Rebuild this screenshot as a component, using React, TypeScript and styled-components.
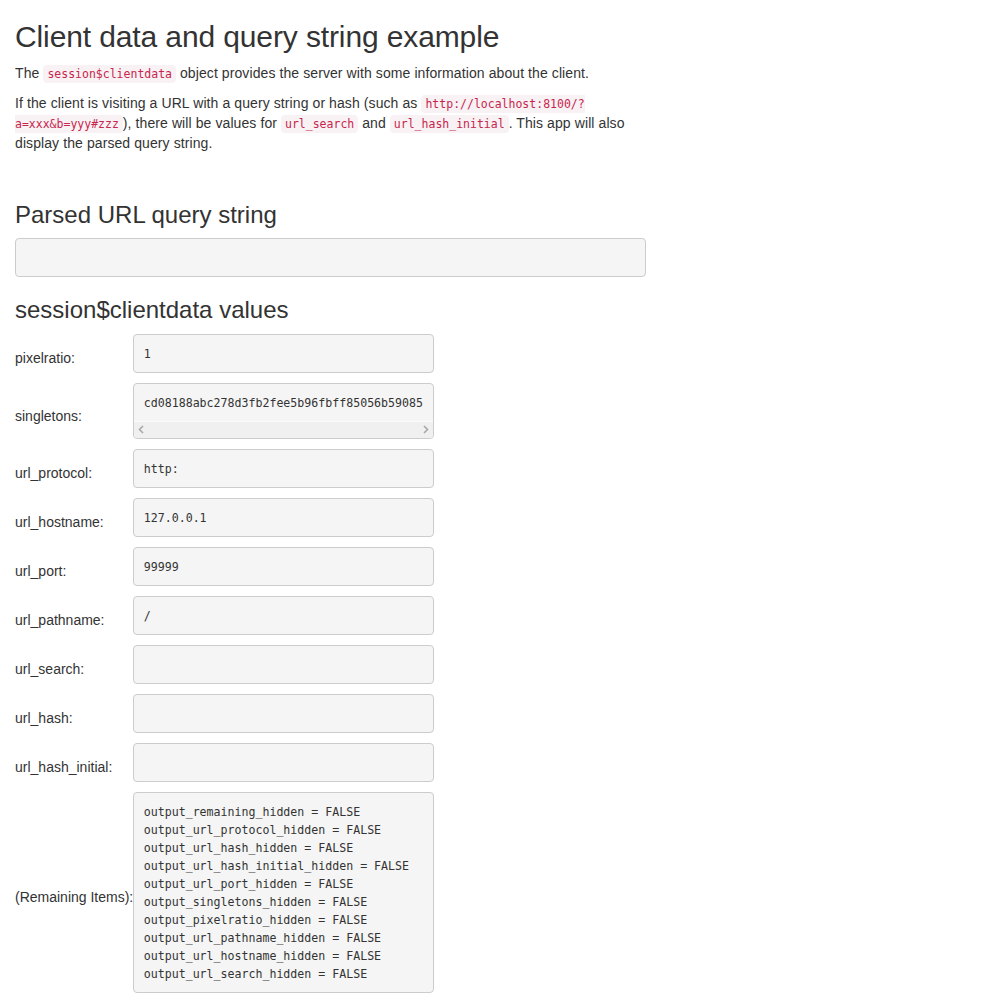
import React from "react";
import styled, { createGlobalStyle } from "styled-components";

const GlobalStyle = createGlobalStyle`
  html, body { margin: 0; padding: 0; background: #fff; }
  body {
    font-family: "Liberation Sans", Arial, sans-serif;
    font-size: 14px;
    line-height: 1.42857143;
    color: #333;
  }
  * { box-sizing: border-box; }
`;

const Page = styled.div`
  padding: 0 15px;
`;

const Column = styled.div`
  width: 631px;
`;

const Title = styled.h2`
  font-size: 30px;
  font-weight: 500;
  line-height: 1.1;
  letter-spacing: -0.12px;
  margin: 20px 0 10px;
`;

const Intro = styled.div`
  padding-bottom: 19px;
`;

const Para = styled.p`
  margin: 0 0 10px;
  letter-spacing: 0.09px;
`;

const Code = styled.code`
  font-family: "DejaVu Sans Mono", "Liberation Mono", monospace;
  font-size: 11.5px;
  letter-spacing: 0;
  color: #c7254e;
  background: #f9f2f4;
  padding: 2px 4px;
  border-radius: 4px;
`;

const SectionTitle = styled.h3`
  font-size: 24px;
  font-weight: 500;
  line-height: 1.1;
  margin: 20px 0 10px;
`;

const Pre = styled.pre<{ $width?: number }>`
  display: block;
  margin: 0 0 10px;
  padding: 10.5px 9.5px 8.5px;
  width: ${(p) => (p.$width ? `${p.$width}px` : "auto")};
  min-height: 39px;
  font-family: "DejaVu Sans Mono", "Liberation Mono", monospace;
  font-size: 11.6px;
  line-height: 18px;
  color: #333;
  background: #f5f5f5;
  border: 1px solid #ccc;
  border-radius: 4px;
  white-space: pre;
  overflow: hidden;
`;

const ScrollPre = styled(Pre)`
  padding: 10.5px 9.5px 0;
`;

const ScrollText = styled.div`
  padding-bottom: 8.5px;
`;

const ScrollBar = styled.div`
  margin: 0 -9.5px;
  height: 17px;
  display: flex;
  align-items: center;
  justify-content: space-between;
  padding: 0 4px;
  background: #f0f0f0;
  border-top: 1px solid #fbfbfb;
`;

const Arrow = styled.svg`
  width: 6px;
  height: 9px;
  display: block;
`;

const ValueGrid = styled.div`
  display: grid;
  grid-template-columns: max-content 301px;
  align-items: center;
`;

const Label = styled.div`
  white-space: nowrap;
`;

const rows: [string, string][] = [
  ["pixelratio:", "1"],
  ["singletons:", "cd08188abc278d3fb2fee5b96fbff85056b59085"],
  ["url_protocol:", "http:"],
  ["url_hostname:", "127.0.0.1"],
  ["url_port:", "99999"],
  ["url_pathname:", "/"],
  ["url_search:", ""],
  ["url_hash:", ""],
  ["url_hash_initial:", ""],
];

const remaining = [
  "output_remaining_hidden = FALSE",
  "output_url_protocol_hidden = FALSE",
  "output_url_hash_hidden = FALSE",
  "output_url_hash_initial_hidden = FALSE",
  "output_url_port_hidden = FALSE",
  "output_singletons_hidden = FALSE",
  "output_pixelratio_hidden = FALSE",
  "output_url_pathname_hidden = FALSE",
  "output_url_hostname_hidden = FALSE",
  "output_url_search_hidden = FALSE",
].join("\n");

export default function App() {
  return (
    <>
      <GlobalStyle />
      <Page>
        <Title>Client data and query string example</Title>
        <Column>
          <Intro>
            <Para>
              The <Code>session$clientdata</Code> object provides the server with some
              information about the client.
            </Para>
            <Para>
              If the client is visiting a URL with a query string or hash (such as{" "}
              <Code>http://localhost:8100/?a=xxx&amp;b=yyy#zzz</Code>), there will be values
              for <Code>url_search</Code> and <Code>url_hash_initial</Code>. This app will
              also display the parsed query string.
            </Para>
          </Intro>
          <SectionTitle>Parsed URL query string</SectionTitle>
          <Pre></Pre>
          <SectionTitle>session$clientdata values</SectionTitle>
          <ValueGrid>
            {rows.map(([label, value]) => (
              <React.Fragment key={label}>
                <Label>{label}</Label>
                {label === "singletons:" ? (
                  <ScrollPre $width={301}>
                    <ScrollText>{value}</ScrollText>
                    <ScrollBar>
                      <Arrow viewBox="0 0 6 9">
                        <path d="M5 1 L1.5 4.5 L5 8" fill="none" stroke="#a8a8a8" strokeWidth="1.6" />
                      </Arrow>
                      <Arrow viewBox="0 0 6 9">
                        <path d="M1 1 L4.5 4.5 L1 8" fill="none" stroke="#a8a8a8" strokeWidth="1.6" />
                      </Arrow>
                    </ScrollBar>
                  </ScrollPre>
                ) : (
                  <Pre $width={301}>{value}</Pre>
                )}
              </React.Fragment>
            ))}
            <Label>(Remaining Items):</Label>
            <Pre $width={301}>{remaining}</Pre>
          </ValueGrid>
        </Column>
      </Page>
    </>
  );
}
